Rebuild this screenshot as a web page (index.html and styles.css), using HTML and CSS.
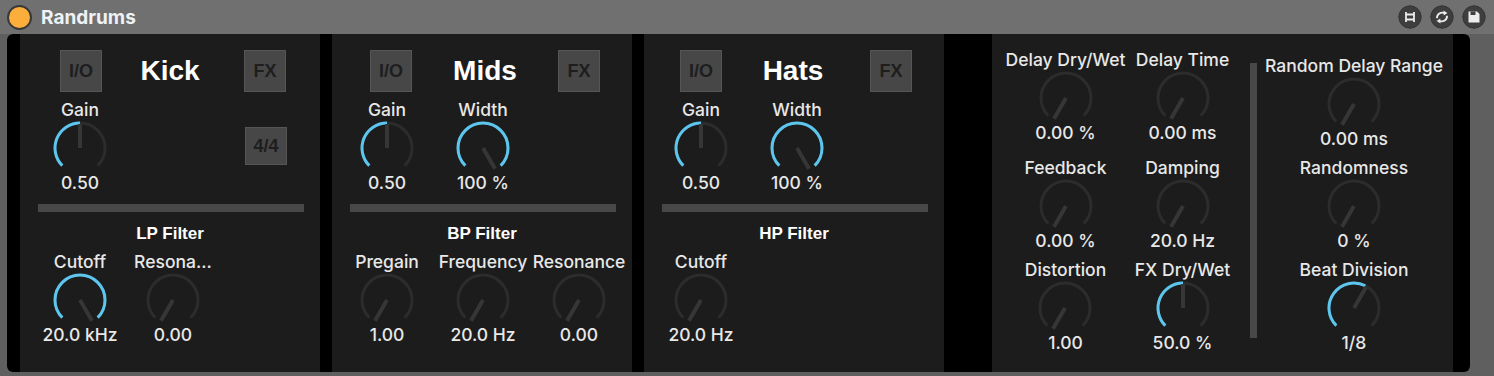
FILE: index.html
```html
<!DOCTYPE html>
<html>
<head>
<meta charset="utf-8">
<title>Randrums</title>
<link rel="stylesheet" href="styles.css">
</head>
<body>
<div class="titlebar">
  <div class="led"></div>
  <div class="title">Randrums</div>
  <div class="tools">
    <svg class="tool" viewBox="0 0 24 24"><circle cx="12" cy="12" r="11.2" class="tc"/><path class="ti-s" d="M8 7v10M16 7v10M8 9.5h8M8 14.5h8"/></svg>
    <svg class="tool" viewBox="0 0 24 24"><circle cx="12" cy="12" r="11.2" class="tc"/><path class="ti-s" d="M7 13.2a5.2 5.2 0 0 1 7.6-5"/><path class="ti-f" d="M13.4 5.6l4 2.4-3.6 2.6z"/><path class="ti-s" d="M17 10.8a5.2 5.2 0 0 1-7.6 5"/><path class="ti-f" d="M10.6 18.4l-4-2.4 3.6-2.6z"/></svg>
    <svg class="tool" viewBox="0 0 24 24"><circle cx="12" cy="12" r="11.2" class="tc"/><path class="ti-f" d="M6.5 6.5h8.5l2.5 2.5v8.5h-11z"/><path class="ti-d" d="M8.5 6.5h5v3.5h-5z"/></svg>
  </div>
</div>

<div class="device">
  <!-- Kick -->
  <section class="strip">
    <div class="head head-kick">
      <div class="btn">I/O</div>
      <div class="name">Kick</div>
      <div class="btn">FX</div>
    </div>
    <div class="row row-kick">
      <div class="knob">
        <div class="lbl">Gain</div>
        <svg class="dial" viewBox="0 0 56 53"><path class="trk" d="M10.32 45.68A25 25 0 1 1 45.68 45.68"/><path class="arc" d="M10.32 45.68A25 25 0 0 1 28 3"/><line class="ndl" x1="28" y1="28" x2="28" y2="4"/></svg>
        <div class="lbl">0.50</div>
      </div>
      <div class="btn sig">4/4</div>
    </div>
    <div class="sep"></div>
    <div class="sub">LP Filter</div>
    <div class="row row-kick">
      <div class="knob">
        <div class="lbl">Cutoff</div>
        <svg class="dial" viewBox="0 0 56 53"><path class="trk" d="M10.32 45.68A25 25 0 1 1 45.68 45.68"/><path class="arc" d="M10.32 45.68A25 25 0 1 1 45.68 45.68"/><line class="ndl" x1="28" y1="28" x2="40" y2="48.78"/></svg>
        <div class="lbl">20.0 kHz</div>
      </div>
      <div class="knob knob-narrow">
        <div class="lbl">Resona...</div>
        <svg class="dial" viewBox="0 0 56 53"><path class="trk" d="M10.32 45.68A25 25 0 1 1 45.68 45.68"/><line class="ndl" x1="28" y1="28" x2="16" y2="48.78"/></svg>
        <div class="lbl">0.00</div>
      </div>
    </div>
  </section>

  <!-- Mids -->
  <section class="strip">
    <div class="head">
      <div class="btn">I/O</div>
      <div class="name">Mids</div>
      <div class="btn">FX</div>
    </div>
    <div class="row row-mids">
      <div class="knob">
        <div class="lbl">Gain</div>
        <svg class="dial" viewBox="0 0 56 53"><path class="trk" d="M10.32 45.68A25 25 0 1 1 45.68 45.68"/><path class="arc" d="M10.32 45.68A25 25 0 0 1 28 3"/><line class="ndl" x1="28" y1="28" x2="28" y2="4"/></svg>
        <div class="lbl">0.50</div>
      </div>
      <div class="knob">
        <div class="lbl">Width</div>
        <svg class="dial" viewBox="0 0 56 53"><path class="trk" d="M10.32 45.68A25 25 0 1 1 45.68 45.68"/><path class="arc" d="M10.32 45.68A25 25 0 1 1 45.68 45.68"/><line class="ndl" x1="28" y1="28" x2="40" y2="48.78"/></svg>
        <div class="lbl">100 %</div>
      </div>
    </div>
    <div class="sep"></div>
    <div class="sub">BP Filter</div>
    <div class="row row-mids">
      <div class="knob">
        <div class="lbl">Pregain</div>
        <svg class="dial" viewBox="0 0 56 53"><path class="trk" d="M10.32 45.68A25 25 0 1 1 45.68 45.68"/><line class="ndl" x1="28" y1="28" x2="16" y2="48.78"/></svg>
        <div class="lbl">1.00</div>
      </div>
      <div class="knob">
        <div class="lbl">Frequency</div>
        <svg class="dial" viewBox="0 0 56 53"><path class="trk" d="M10.32 45.68A25 25 0 1 1 45.68 45.68"/><line class="ndl" x1="28" y1="28" x2="16" y2="48.78"/></svg>
        <div class="lbl">20.0 Hz</div>
      </div>
      <div class="knob">
        <div class="lbl">Resonance</div>
        <svg class="dial" viewBox="0 0 56 53"><path class="trk" d="M10.32 45.68A25 25 0 1 1 45.68 45.68"/><line class="ndl" x1="28" y1="28" x2="16" y2="48.78"/></svg>
        <div class="lbl">0.00</div>
      </div>
    </div>
  </section>

  <!-- Hats -->
  <section class="strip">
    <div class="head head-hats">
      <div class="btn">I/O</div>
      <div class="name">Hats</div>
      <div class="btn">FX</div>
    </div>
    <div class="row row-hats">
      <div class="knob">
        <div class="lbl">Gain</div>
        <svg class="dial" viewBox="0 0 56 53"><path class="trk" d="M10.32 45.68A25 25 0 1 1 45.68 45.68"/><path class="arc" d="M10.32 45.68A25 25 0 0 1 28 3"/><line class="ndl" x1="28" y1="28" x2="28" y2="4"/></svg>
        <div class="lbl">0.50</div>
      </div>
      <div class="knob">
        <div class="lbl">Width</div>
        <svg class="dial" viewBox="0 0 56 53"><path class="trk" d="M10.32 45.68A25 25 0 1 1 45.68 45.68"/><path class="arc" d="M10.32 45.68A25 25 0 1 1 45.68 45.68"/><line class="ndl" x1="28" y1="28" x2="40" y2="48.78"/></svg>
        <div class="lbl">100 %</div>
      </div>
    </div>
    <div class="sep"></div>
    <div class="sub">HP Filter</div>
    <div class="row row-hats">
      <div class="knob">
        <div class="lbl">Cutoff</div>
        <svg class="dial" viewBox="0 0 56 53"><path class="trk" d="M10.32 45.68A25 25 0 1 1 45.68 45.68"/><line class="ndl" x1="28" y1="28" x2="16" y2="48.78"/></svg>
        <div class="lbl">20.0 Hz</div>
      </div>
    </div>
  </section>

  <!-- FX -->
  <section class="fxpanel">
    <div class="col">
      <div class="knob">
        <div class="lbl">Delay Dry/Wet</div>
        <svg class="dial" viewBox="0 0 56 53"><path class="trk" d="M10.32 45.68A25 25 0 1 1 45.68 45.68"/><line class="ndl" x1="28" y1="28" x2="16" y2="48.78"/></svg>
        <div class="lbl">0.00 %</div>
      </div>
      <div class="knob knob-mid">
        <div class="lbl">Feedback</div>
        <svg class="dial" viewBox="0 0 56 53"><path class="trk" d="M10.32 45.68A25 25 0 1 1 45.68 45.68"/><line class="ndl" x1="28" y1="28" x2="16" y2="48.78"/></svg>
        <div class="lbl">0.00 %</div>
      </div>
      <div class="knob">
        <div class="lbl">Distortion</div>
        <svg class="dial" viewBox="0 0 56 53"><path class="trk" d="M10.32 45.68A25 25 0 1 1 45.68 45.68"/><line class="ndl" x1="28" y1="28" x2="16" y2="48.78"/></svg>
        <div class="lbl">1.00</div>
      </div>
    </div>
    <div class="col">
      <div class="knob">
        <div class="lbl">Delay Time</div>
        <svg class="dial" viewBox="0 0 56 53"><path class="trk" d="M10.32 45.68A25 25 0 1 1 45.68 45.68"/><line class="ndl" x1="28" y1="28" x2="16" y2="48.78"/></svg>
        <div class="lbl">0.00 ms</div>
      </div>
      <div class="knob knob-mid">
        <div class="lbl">Damping</div>
        <svg class="dial" viewBox="0 0 56 53"><path class="trk" d="M10.32 45.68A25 25 0 1 1 45.68 45.68"/><line class="ndl" x1="28" y1="28" x2="16" y2="48.78"/></svg>
        <div class="lbl">20.0 Hz</div>
      </div>
      <div class="knob">
        <div class="lbl">FX Dry/Wet</div>
        <svg class="dial" viewBox="0 0 56 53"><path class="trk" d="M10.32 45.68A25 25 0 1 1 45.68 45.68"/><path class="arc" d="M10.32 45.68A25 25 0 0 1 28 3"/><line class="ndl" x1="28" y1="28" x2="28" y2="4"/></svg>
        <div class="lbl">50.0 %</div>
      </div>
    </div>
    <div class="vbar"></div>
    <div class="col col-wide">
      <div class="knob">
        <div class="lbl">Random Delay Range</div>
        <svg class="dial" viewBox="0 0 56 53"><path class="trk" d="M10.32 45.68A25 25 0 1 1 45.68 45.68"/><line class="ndl" x1="28" y1="28" x2="16" y2="48.78"/></svg>
        <div class="lbl">0.00 ms</div>
      </div>
      <div class="knob">
        <div class="lbl">Randomness</div>
        <svg class="dial" viewBox="0 0 56 53"><path class="trk" d="M10.32 45.68A25 25 0 1 1 45.68 45.68"/><line class="ndl" x1="28" y1="28" x2="16" y2="48.78"/></svg>
        <div class="lbl">0 %</div>
      </div>
      <div class="knob">
        <div class="lbl">Beat Division</div>
        <svg class="dial" viewBox="0 0 56 53"><path class="trk" d="M10.32 45.68A25 25 0 1 1 45.68 45.68"/><path class="arc" d="M10.32 45.68A25 25 0 0 1 39.35 5.72"/><line class="ndl" x1="28" y1="28" x2="40" y2="7.22"/></svg>
        <div class="lbl">1/8</div>
      </div>
    </div>
  </section>
</div>
</body>
</html>
```

FILE: styles.css
```css
* { box-sizing: border-box; margin: 0; padding: 0; }

body {
  width: 1494px;
  height: 376px;
  overflow: hidden;
  background: #5f5f5f;
  font-family: Inter, "Liberation Sans", sans-serif;
  color: #e8e8e8;
}

.titlebar {
  height: 34px;
  display: flex;
  align-items: center;
  background: #707070;
  padding: 0 8px 0 7px;
}

.led {
  width: 25px;
  height: 25px;
  border-radius: 50%;
  background: #fbae3c;
  border: 2px solid #383838;
}

.title {
  margin-left: 9px;
  font-family: Inter, "Liberation Sans", sans-serif;
  font-weight: 700;
  font-size: 19px;
  color: #eef2f5;
}

.tools {
  margin-left: auto;
  display: flex;
  gap: 8px;
}

.tool { width: 24px; height: 24px; display: block; }
.tc { fill: #3e3e3e; stroke: #353535; stroke-width: 1; }
.ti-s { fill: none; stroke: #ececec; stroke-width: 1.8; }
.ti-f { fill: #ececec; }
.ti-d { fill: #3e3e3e; }

.device {
  margin-left: 7px;
  width: 1463px;
  height: 338px;
  background: #000;
  border-radius: 6px;
  display: flex;
  padding-left: 13px;
}

.strip {
  width: 300px;
  background: #1c1c1c;
  display: flex;
  flex-direction: column;
}

.strip + .strip { margin-left: 12px; }

.head {
  height: 58px;
  padding: 16px 32px 0 38px;
  display: flex;
  align-items: center;
  justify-content: space-between;
}

.head-kick { padding-left: 40px; padding-right: 34px; }
.head-kick .name { margin-right: 6px; }
.head-hats { padding-left: 36px; }
.head-hats .name { margin-right: 6px; }

.name {
  font-family: "Liberation Sans", Arial, sans-serif;
  font-weight: 700;
  font-size: 28px;
  color: #ffffff;
}

.btn {
  width: 42px;
  height: 42px;
  background: #474747;
  border: 1px solid #555555;
  display: flex;
  align-items: center;
  justify-content: center;
  font-family: "Liberation Sans", Arial, sans-serif;
  font-weight: 700;
  font-size: 18px;
  color: #1e1e1e;
}

.btn.sig {
  height: 38px;
  margin-left: auto;
  margin-right: 33px;
  margin-top: 27px;
}

.row {
  display: flex;
  height: 93px;
  margin-top: 8px;
}

.row-kick { padding-left: 12px; }
.row-mids { padding-left: 7px; }
.row-hats { padding-left: 9px; }

.knob {
  width: 96px;
  display: flex;
  flex-direction: column;
  align-items: center;
}

.knob-narrow { width: 90px; }

.lbl {
  font-size: 17.5px;
  line-height: 20px;
  font-weight: 500;
  white-space: nowrap;
  color: #e8e8e8;
}

.dial { width: 56px; height: 53px; display: block; }
.trk { fill: none; stroke: #2c2c2c; stroke-width: 3; }
.arc { fill: none; stroke: #5cc6ee; stroke-width: 3; }
.ndl { stroke: #363636; stroke-width: 4; }

.sep {
  height: 8px;
  margin: 11px 16px 0 18px;
  background: #484848;
}

.sub {
  margin-top: 12px;
  text-align: center;
  font-family: "Liberation Sans", Arial, sans-serif;
  font-weight: 700;
  font-size: 17px;
  line-height: 20px;
  color: #ffffff;
}

.fxpanel {
  margin-left: 48px;
  width: 461px;
  background: #1c1c1c;
  display: flex;
  padding-left: 15px;
}

.col {
  width: 117px;
  padding-top: 16px;
  display: flex;
  flex-direction: column;
  align-items: center;
  gap: 12px;
}

.col .knob { width: auto; }
.col .knob-mid { margin-top: 3px; margin-bottom: -3px; }

.col-wide {
  width: 180px;
  margin-left: 7px;
  padding-top: 22px;
  gap: 9px;
}

.vbar {
  width: 7px;
  height: 275px;
  margin-top: 29px;
  margin-left: 9px;
  background: #484848;
}
```
